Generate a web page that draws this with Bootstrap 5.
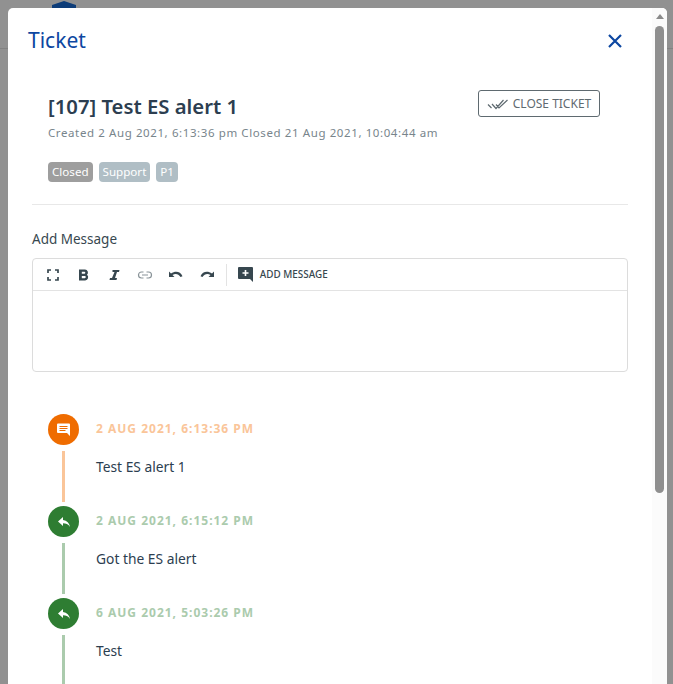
<!DOCTYPE html>
<html lang="en">
<head>
<meta charset="utf-8">
<title>Ticket</title>
<link href="https://cdn.jsdelivr.net/npm/bootstrap@5.3.0/dist/css/bootstrap.min.css" rel="stylesheet">
<style>
html,body{height:684px;overflow:hidden}
body{background:#919191;font-family:"Noto Sans","Liberation Sans",sans-serif;color:#2c3e50;position:relative}
.bg-line{position:absolute;left:0;right:0;top:48px;height:1px;background:#828282}
.bg-logo{position:absolute;left:52px;top:0}
.shell{position:absolute;left:8px;top:8px;width:659px;height:676px;background:#fff;border-radius:5px 5px 0 0;overflow:hidden}
.main-col{width:644px;flex:none}
.sbar{width:15px;flex:none;background:#fbfbfb;position:relative}
.sbar-up{width:0;height:0;border-left:4px solid transparent;border-right:4px solid transparent;border-bottom:5px solid #8a8a8a;margin:6px auto 0}
.sbar-thumb{position:absolute;left:3px;top:18px;width:9px;height:467px;border-radius:5px;background:#8f8f8f}
.head-row{padding:15px 29px 0 20px;height:50px}
.modal-name{font-size:21px;color:#0d47a1;line-height:27px;margin:0;font-weight:400}
.x-btn{background:none;border:0;padding:0;line-height:0}
.ticket-top{padding:34px 52px 0 40px}
.ticket-name{font-size:20.3px;font-weight:600;line-height:28px;margin:0 0 5px;color:#2c3e50}
.ticket-sub{font-size:11.5px;line-height:16px;color:#78858c;letter-spacing:.6px;margin:0}
.close-btn{border:1px solid #5f6a70;border-radius:3px;background:#fff;color:#5f6a70;font-size:12px;height:27px;width:122px;padding:0;flex:none;margin-top:-2px}
.tag-row{margin-top:21px;gap:6px}
.tag-item{font-size:11.6px;line-height:20px;height:20px;padding:0 4px;border-radius:4px;color:#fff;background:#b0bec5}
.tag-dark{background:#9e9e9e}
.split{border-top:1px solid #e8e8e8;margin:22px 24px 0 24px}
.field-name{font-size:13.5px;line-height:20px;margin:24px 0 9px 24px;color:#37474f}
.editor{margin:0 24px 0 24px;height:114px;border:1px solid #dcdcdc;border-radius:4px}
.tools{height:32px;border-bottom:1px solid #e3e3e3;padding-left:12px}
.tool{width:16px;height:16px;margin-right:14.8px;flex:none;display:block}
.tool-sep{width:1px;height:22px;background:#e3e3e3;margin:0 11px 0 -4px}
.tool-text{font-size:9.9px;font-weight:500;color:#37474f;margin-left:7px}
.tline{padding:42px 0 0 40px}
.entry{height:92px}
.dot-col{width:31px;flex:none;margin-right:17px}
.dot{width:31px;height:31px;border-radius:50%;flex:none}
.dot-o{background:#ef6c00}
.dot-g{background:#2e7d32}
.stem{width:3px;height:51px;margin-top:6px}
.stem-o{background:#fac599}
.stem-g{background:#abcbad}
.stamp{font-size:12px;font-weight:700;letter-spacing:1px;line-height:29px;text-transform:uppercase}
.stamp-o{color:#fac599}
.stamp-g{color:#abcbad}
.msg{font-size:13.8px;line-height:20px;margin:14px 0 0;color:#2c3e50}
</style>
</head>
<body>
<div class="bg-line"></div>
<svg class="bg-logo" width="26" height="8" viewBox="0 0 26 8"><path d="M0 8V5L12 1l12 4v3z" fill="#0d3c78"/></svg>
<div class="shell d-flex">
  <div class="main-col">
    <div class="head-row d-flex justify-content-between align-items-center">
      <h5 class="modal-name">Ticket</h5>
      <button class="x-btn" aria-label="Close"><svg width="16" height="16" viewBox="0 0 16 16"><path d="M2 2l12 12M14 2 2 14" stroke="#0d47a1" stroke-width="2.2" fill="none"/></svg></button>
    </div>
    <div class="ticket-top d-flex justify-content-between align-items-start">
      <div>
        <h4 class="ticket-name">[107] Test ES alert 1</h4>
        <p class="ticket-sub">Created 2 Aug 2021, 6:13:36 pm Closed 21 Aug 2021, 10:04:44 am</p>
        <div class="d-flex tag-row">
          <span class="tag-item tag-dark">Closed</span><span class="tag-item">Support</span><span class="tag-item">P1</span>
        </div>
      </div>
      <button class="close-btn d-flex align-items-center justify-content-center gap-1">
        <svg width="22" height="12" viewBox="0 0 22 12"><path d="M1 6.500 4.500 10M5 6l4 4.500L16.500 2M9 6.500l3 3.500L20.500 2" stroke="#5f6a70" stroke-width="1.2" fill="none"/></svg>CLOSE TICKET
      </button>
    </div>
    <div class="split"></div>
    <div class="field-name">Add Message</div>
    <div class="editor">
      <div class="tools d-flex align-items-center">
        <svg class="tool" viewBox="0 0 16 16"><path d="M3 6V3h3M10 3h3v3M13 10v3h-3M6 13H3v-3" stroke="#37474f" stroke-width="1.7" fill="none"/></svg>
        <svg class="tool" viewBox="0 0 16 16"><path d="M3 2.500h6a3 3 0 0 1 2 5.200 3.300 3.300 0 0 1-1.800 5.800H3zM5.800 4.800v2h2.500a1 1 0 0 0 0-2zM5.800 9v2.200h2.900a1.100 1.100 0 0 0 0-2.200z" fill="#37474f" fill-rule="evenodd"/></svg>
        <svg class="tool" viewBox="0 0 16 16"><path d="M5.500 3h7l-.5 2h-2L8 11h2l-.5 2h-7l.5-2h2l2.500-6h-2z" fill="#37474f"/></svg>
        <svg class="tool" viewBox="0 0 16 16"><path d="M6.500 5H4.500a3 3 0 0 0 0 6h2M9.500 5h2a3 3 0 0 1 0 6h-2M5 8h6" stroke="#8a9499" stroke-width="1.200" fill="none"/></svg>
        <svg class="tool" viewBox="0 0 16 16"><path d="M1 4.500V10h5.500L4.500 8c2.500-1.800 6-1.500 8 2l2-.8C12.500 4.500 7.500 3.500 3 6.500z" fill="#37474f"/></svg>
        <svg class="tool" viewBox="0 0 16 16"><path d="M15 4.500V10H9.500l2-2c-2.500-1.800-6-1.500-8 2l-2-.8C3.500 4.500 8.500 3.500 13 6.500z" fill="#37474f"/></svg>
        <span class="tool-sep"></span>
        <svg width="15" height="15" viewBox="0 0 15 15"><path d="M1 0h13a1 1 0 0 1 1 1v14l-3-3H1a1 1 0 0 1-1-1V1a1 1 0 0 1 1-1z" fill="#37474f"/><path d="M7.500 3v6M4.500 6h6" stroke="#fff" stroke-width="1.600"/></svg>
        <span class="tool-text">ADD MESSAGE</span>
      </div>
    </div>
    <div class="tline">
      <div class="entry d-flex">
        <div class="dot-col d-flex flex-column align-items-center">
          <div class="dot dot-o d-flex align-items-center justify-content-center"><svg width="15" height="15" viewBox="0 0 15 15"><path d="M2 1.500h11a1 1 0 0 1 1 1V14l-3-3H2a1 1 0 0 1-1-1V2.500a1 1 0 0 1 1-1z" fill="#fff"/><path d="M3.500 4.500h8M3.500 6.500h8M3.500 8.500h6" stroke="#ef6c00"/></svg></div>
          <div class="stem stem-o"></div>
        </div>
        <div><div class="stamp stamp-o">2 Aug 2021, 6:13:36 pm</div><p class="msg">Test ES alert 1</p></div>
      </div>
      <div class="entry d-flex">
        <div class="dot-col d-flex flex-column align-items-center">
          <div class="dot dot-g d-flex align-items-center justify-content-center"><svg width="14" height="12" viewBox="0 0 14 12"><path d="M6 1 1 5.500 6 10V7.300c3 0 5 .7 7 3.700-.7-4-3-6.500-7-7z" fill="#fff"/></svg></div>
          <div class="stem stem-g"></div>
        </div>
        <div><div class="stamp stamp-g">2 Aug 2021, 6:15:12 pm</div><p class="msg">Got the ES alert</p></div>
      </div>
      <div class="entry d-flex">
        <div class="dot-col d-flex flex-column align-items-center">
          <div class="dot dot-g d-flex align-items-center justify-content-center"><svg width="14" height="12" viewBox="0 0 14 12"><path d="M6 1 1 5.500 6 10V7.300c3 0 5 .7 7 3.700-.7-4-3-6.500-7-7z" fill="#fff"/></svg></div>
          <div class="stem stem-g"></div>
        </div>
        <div><div class="stamp stamp-g">6 Aug 2021, 5:03:26 pm</div><p class="msg">Test</p></div>
      </div>
    </div>
  </div>
  <div class="sbar"><div class="sbar-up"></div><div class="sbar-thumb"></div></div>
</div>
<script src="https://cdn.jsdelivr.net/npm/bootstrap@5.3.0/dist/js/bootstrap.bundle.min.js"></script>
</body>
</html>
